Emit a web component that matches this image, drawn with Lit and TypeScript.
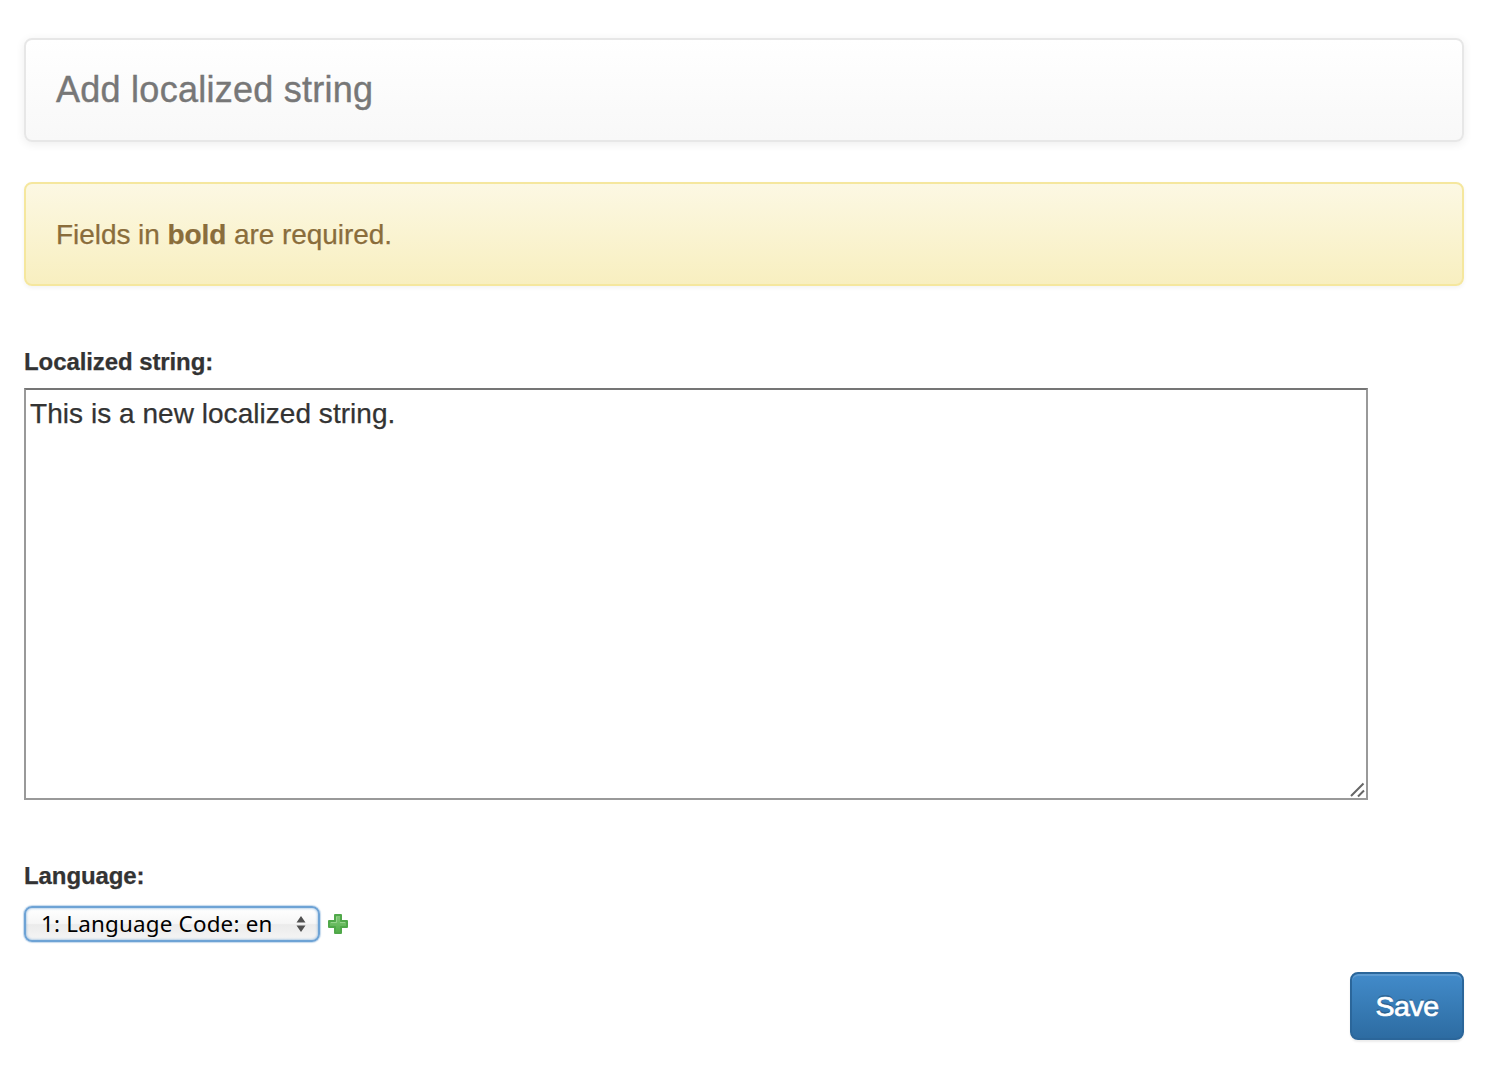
import { LitElement, html, css } from "lit";
import { customElement } from "lit/decorators.js";

@customElement("app-root")
export class AppRoot extends LitElement {
  static styles = css`
    :host {
      display: block;
      box-sizing: border-box;
      width: 100%;
      min-height: 1082px;
      padding: 38px 30px 42px 24px;
      background: #fff;
      color: #333;
      font-family: "Liberation Sans", Arial, sans-serif;
      font-size: 28px;
      line-height: 40px;
      -webkit-text-stroke: 0.25px currentColor;
    }
    * {
      box-sizing: border-box;
    }
    .panel {
      display: flex;
      align-items: center;
      height: 104px;
      padding: 0 30px;
      border: 2px solid #e7e7e7;
      border-radius: 8px;
      background: linear-gradient(#fff, #f8f8f8);
      box-shadow: 0 2px 10px rgba(0, 0, 0, 0.075);
    }
    .title {
      margin: 0;
      color: #777;
      font-size: 36px;
      font-weight: 400;
      letter-spacing: 0.26px;
      -webkit-text-stroke: 0.4px #777;
    }
    .notice {
      display: flex;
      align-items: center;
      height: 104px;
      margin-top: 40px;
      padding: 2px 30px 0;
      border: 2px solid #f5e79e;
      border-radius: 8px;
      background: linear-gradient(#fcf8e3, #f8efc0);
      box-shadow: 0 2px 4px rgba(0, 0, 0, 0.05);
      color: #8a6d3b;
      letter-spacing: -0.06px;
      -webkit-text-stroke: 0.25px #8a6d3b;
      text-shadow: 0 2px 0 rgba(255, 255, 255, 0.2);
    }
    .label {
      display: block;
      font-size: 24px;
      font-weight: 700;
      letter-spacing: -0.09px;
      line-height: 32px;
    }
    .first,
    .second {
      margin-top: 60px;
    }
    .area {
      position: relative;
      width: 1344px;
      height: 412px;
      margin-top: 10px;
      padding: 4px;
      border: 2px solid #999;
      border-top-color: #757575;
      background: #fff;
      letter-spacing: 0.04px;
    }
    .grip {
      position: absolute;
      right: 0;
      bottom: 0;
      width: 16px;
      height: 16px;
    }
    .row {
      display: flex;
      align-items: center;
      gap: 8px;
      height: 36px;
      margin-top: 14px;
    }
    .select {
      display: flex;
      align-items: center;
      justify-content: space-between;
      width: 296px;
      height: 36px;
      padding: 0 12px 0 15px;
      border: 2px solid #6ea3d5;
      border-radius: 8px;
      background: linear-gradient(#fff 0%, #f6f6f6 48%, #ebebeb 52%, #f5f5f5 100%);
      box-shadow: 0 0 1px 1px rgba(110, 163, 213, 0.4), inset 0 0 2px 1px rgba(110, 163, 213, 0.45);
      color: #000;
      font-family: "Noto Sans", sans-serif;
      font-size: 22.4px;
      line-height: 32px;
      white-space: nowrap;
      -webkit-text-stroke: 0;
    }
    .value {
      letter-spacing: 0.2px;
    }
    .arrows {
      width: 10px;
      height: 18px;
    }
    .plus {
      width: 20px;
      height: 20px;
    }
    .actions {
      display: flex;
      justify-content: flex-end;
      margin-top: 30px;
    }
    .save {
      display: flex;
      align-items: center;
      justify-content: center;
      width: 114px;
      height: 68px;
      padding: 0;
      border: 2px solid #2b669a;
      border-radius: 8px;
      background: linear-gradient(#428bca, #2d6ca2);
      box-shadow: inset 0 2px 0 rgba(255, 255, 255, 0.15), 0 2px 2px rgba(0, 0, 0, 0.075);
      color: #fff;
      font: 28.5px "Liberation Sans", Arial, sans-serif;
      letter-spacing: -0.5px;
      -webkit-text-stroke: 0.7px #fff;
      text-shadow: 0 -2px 0 rgba(0, 0, 0, 0.2);
    }
  `;

  render() {
    return html`
      <header class="panel"><h1 class="title">Add localized string</h1></header>
      <div class="notice">
        <span>Fields in <strong>bold</strong> are required.</span>
      </div>
      <div class="label first">Localized string:</div>
      <div class="area">
        This is a new localized string.
        <svg class="grip" viewBox="0 0 16 16" fill="none" stroke="#666" stroke-width="2">
          <path d="M1 14L13.500 1.500M8 14.500l6-6" />
        </svg>
      </div>
      <div class="label second">Language:</div>
      <div class="row">
        <div class="select">
          <span class="value">1: Language Code: en</span>
          <svg class="arrows" viewBox="0 0 10 18" fill="#505050">
            <path d="M5 1l4.500 6.500h-9zM5 17L.5 10.500h9z" />
          </svg>
        </div>
        <svg class="plus" viewBox="0 0 20 20">
          <defs>
            <linearGradient id="leaf" x1="0" y1="0" x2="0" y2="1">
              <stop offset="0" stop-color="#84c97a" />
              <stop offset="1" stop-color="#52ad49" />
            </linearGradient>
          </defs>
          <path d="M7 1h6v6h6v6h-6v6H7v-6H1V7h6z" fill="url(#leaf)" stroke="#50a84a" stroke-width="2" stroke-linejoin="round" />
          <path d="M8.500 3v5.500H3M12 8.500h5" fill="none" stroke="#96d38c" />
        </svg>
      </div>
      <div class="actions"><button class="save">Save</button></div>
    `;
  }
}
